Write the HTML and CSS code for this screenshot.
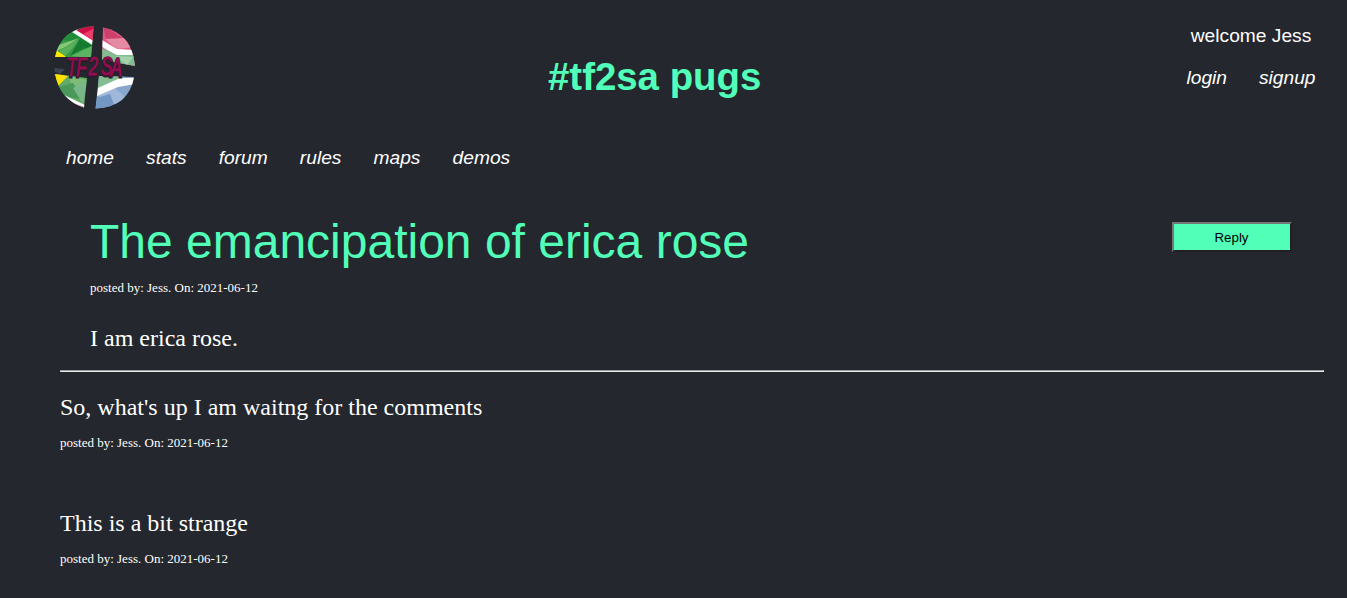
FILE: index.html
```html
<!DOCTYPE html>
<html lang="en">
<head>
<meta charset="utf-8">
<title>#tf2sa pugs</title>
<link rel="stylesheet" href="styles.css">
</head>
<body>
<header class="header">
  <svg class="logo" viewBox="0 0 100 100" role="img" aria-label="TF2SA">
    <defs>
      <clipPath id="tl"><path d="M48.700 11L46 42L10 42Q16 13 48.700 11Z"/></clipPath>
      <clipPath id="tr"><path d="M58 12.500Q87 18 90 51L57 45Z"/></clipPath>
      <clipPath id="bl"><path d="M10 59L42 63L39 92.500Q15 85 10 59Z"/></clipPath>
      <clipPath id="br"><path d="M54 61L89 62Q84 92 50.500 93.500Z"/></clipPath>
    </defs>
    <g clip-path="url(#tl)">
      <path fill="#379b45" d="M8 8H50V44H8Z"/>
      <path fill="#218c3a" d="M18 25L31 14L48 30L34 27Z"/>
      <path fill="#86c878" d="M11 31L34 23L22 31L12 36Z"/>
      <path fill="#58b05a" d="M14 36L35 23L27 34L20 41Z"/>
      <path fill="#167a30" d="M25 41L35 24L48 31L38 34Z"/>
      <path fill="#5bb462" d="M26 41L47 31V43Z"/>
      <path fill="#fff" d="M27 17L32 14L49 25V31Z"/>
      <path fill="#cf1048" d="M31 15L50 9V27Z"/>
      <path fill="#e93d6b" d="M38 19L50 13V26Z"/>
      <path fill="#ffe600" d="M8 33L20 41L22 44H8Z"/>
    </g>
    <g clip-path="url(#tr)">
      <path fill="#dc5a82" d="M57 8H92V54H57Z"/>
      <path fill="#cf3f6e" d="M58 10L87 30L61 25Z"/>
      <path fill="#e58aa3" d="M60 24L72 34L90 32L80 23Z"/>
      <path fill="#fff" d="M57 25L72 34L91 35V42L71 40L57 32Z"/>
      <path fill="#82bd91" d="M57 33L72 40L91 40V54L57 49Z"/>
      <path fill="#a3d2ab" d="M70 41L88 42L82 50Z"/>
    </g>
    <path fill="#3b4450" d="M9 53L20 54L15 59L10 57Z"/>
    <g clip-path="url(#bl)">
      <path fill="#63aa68" d="M8 57H44V94H8Z"/>
      <path fill="#7dbb78" d="M23 60L42 65L29 76Z"/>
      <path fill="#4a985b" d="M14 72L28 68L38 84L20 82Z"/>
      <path fill="#79b688" d="M28 73L42 65L38 89Z"/>
      <path fill="#ffe000" d="M9 58L23 61L13 71Z"/>
      <path fill="#fff" d="M17 79L40 90V96L20 87Z"/>
      <path fill="#df617d" d="M28 88L39 92V95Z"/>
    </g>
    <g clip-path="url(#br)">
      <path fill="#86a6cc" d="M48 57H91V95H48Z"/>
      <path fill="#9fb7d8" d="M52 79L70 73L85 86L63 91Z"/>
      <path fill="#7397c4" d="M52 83L65 79L71 95H50Z"/>
      <path fill="#fff" d="M53 72L74 63H91V69L73 72L52 81Z"/>
      <path fill="#83bd91" d="M53 61H80L66 67L53 73Z"/>
    </g>
    <g class="logo-word" transform="translate(0 61) scale(.65 1)">
      <text class="logo-shadow" x="33 48 67 86 101" y="1 1 0 0 1">TF2SA</text>
      <text class="logo-text" x="33 48 67 86 101" y="0 0 -1 -1 0">TF2SA</text>
    </g>
  </svg>
  <h1 class="site-title">#tf2sa pugs</h1>
  <div class="account">
    <span>welcome Jess</span>
    <div class="account-links"><a>login</a><a>signup</a></div>
  </div>
</header>
<nav class="nav"><a>home</a><a>stats</a><a>forum</a><a>rules</a><a>maps</a><a>demos</a></nav>
<main class="main">
  <article class="post">
    <div>
      <h2 class="post-title">The emancipation of erica rose</h2>
      <p class="meta">posted by: Jess. On: 2021-06-12</p>
      <p class="text post-body">I am erica rose.</p>
    </div>
    <button class="reply">Reply</button>
  </article>
  <hr class="rule">
  <section class="comment">
    <p class="text">So, what's up I am waitng for the comments</p>
    <p class="meta">posted by: Jess. On: 2021-06-12</p>
  </section>
  <section class="comment">
    <p class="text">This is a bit strange</p>
    <p class="meta">posted by: Jess. On: 2021-06-12</p>
  </section>
</main>
</body>
</html>
```
FILE: styles.css
```css
* { box-sizing: border-box; }
body {
  margin: 0;
  height: 598px;
  overflow: hidden;
  background: #24272e;
  color: #fff;
  font-family: "Liberation Serif", "Times New Roman", serif;
}
h1, h2, p { margin: 0; font-weight: normal; }
.header {
  display: grid;
  grid-template-columns: 100px 1fr 130px;
  height: 147px;
  padding: 15px 31px 0 45px;
  font: 19.2px/22px "Liberation Sans", Arial, sans-serif;
}
.logo { width: 100px; height: 100px; }
.logo-word { font: italic 26px "Liberation Sans", Arial, sans-serif; }
.logo-shadow { fill: #2b1c2c; stroke: #2b1c2c; stroke-width: 3px; }
.logo-text { fill: #970c50; stroke: #970c50; stroke-width: .8px; }
.site-title {
  margin: 40px 0 0 403px;
  color: #52ffb8;
  font-size: 38.4px;
  font-weight: bold;
  line-height: 44px;
  white-space: nowrap;
}
.account { display: flex; flex-direction: column; align-items: center; gap: 20px; padding-top: 10px; }
.account-links { display: flex; gap: 32px; font-style: italic; }
.nav {
  display: flex;
  gap: 32.1px;
  padding-left: 66px;
  font: italic 19.2px/22px "Liberation Sans", Arial, sans-serif;
}
.main { padding: 45px 23px 0 60px; }
.post { display: flex; justify-content: space-between; height: 156px; padding: 0 32px 0 30px; }
.post-title { color: #52ffb8; font: 48px/56px "Liberation Sans", Arial, sans-serif; }
.meta { margin-top: 10px; font-size: 13px; line-height: 16px; }
.text { font-size: 24px; line-height: 28px; }
.post-body { margin-top: 28px; }
.reply {
  width: 120px;
  height: 30px;
  margin-top: 8px;
  padding: 1px 1px 0 0;
  border: 2px solid;
  border-color: #767676 #212121 #212121 #767676;
  background: #52ffb8;
  color: #000;
  font: 13.333px "Liberation Sans", Arial, sans-serif;
}
.rule { height: 2px; margin: 0 0 21px; border: 1px solid; border-color: #9a9a9a #eee #eee #9a9a9a; }
.comment { height: 116px; }
.comment .meta { margin-top: 14px; }
```
